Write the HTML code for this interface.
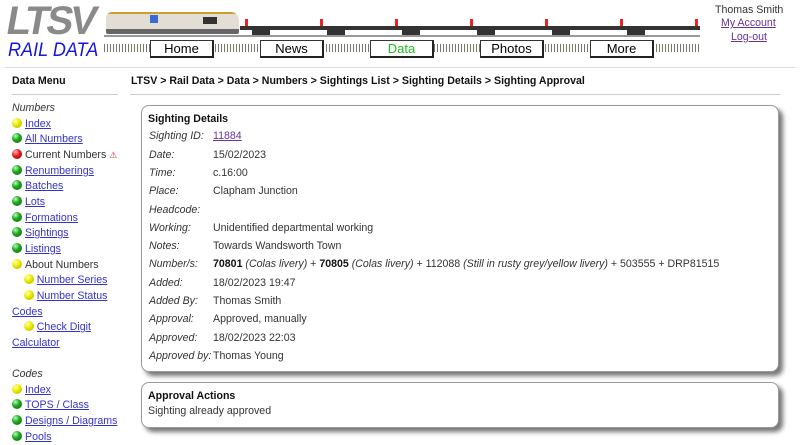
<!DOCTYPE html>
<html><head><style>
body{margin:0;width:800px;height:440px;overflow:hidden;background:#fff;font-family:"Liberation Sans",Arial,sans-serif;font-size:10.6px;color:#333;position:relative}
.a{position:absolute;white-space:nowrap}
a{color:#33c;text-decoration:underline}
.ball{display:inline-block;width:10px;height:10px;border-radius:50%;vertical-align:-1px;margin-right:3px}
.y{background:radial-gradient(circle at 35% 30%,#ffffc0,#ee0 40%,#aa0 100%)}
.g{background:radial-gradient(circle at 35% 30%,#bfb,#2a2 40%,#060 100%)}
.r{background:radial-gradient(circle at 35% 30%,#fbb,#e22 40%,#700 100%)}
.btn{position:absolute;top:40px;width:61px;height:15px;border:1px solid #333;border-right:2px solid #222;border-bottom:2px solid #222;background:#fff;font-size:13px;text-align:center;line-height:15px;color:#000}
.card{position:absolute;left:141px;width:636px;border:1px solid #999;border-radius:8px;background:#fff;box-shadow:4px 4px 5px #777}
.lb{position:absolute;left:149px;font-style:italic}
.vl{position:absolute;left:213px}
</style></head><body>
<div class="a" style="left:7px;top:1px;font-size:40px;line-height:40px;font-weight:bold;color:#8a8a8a;letter-spacing:-3px;transform:skewX(-10deg)">LTSV</div>
<div class="a" style="left:8px;top:40px;font-size:19px;line-height:22px;font-style:italic;color:#1515e0;transform:scaleX(0.95);transform-origin:left">RAIL DATA</div>
<!-- train -->
<div class="a" style="left:106px;top:12px;width:133px;height:22px;background:linear-gradient(#c9a030 0 2px,#e2ded6 2px 17px,#666 17px);border-radius:6px 8px 2px 2px"></div>
<div class="a" style="left:150px;top:15px;width:8px;height:8px;background:#3a6ad0"></div>
<div class="a" style="left:203px;top:17px;width:14px;height:7px;background:#333"></div>
<div class="a" style="left:240px;top:26px;width:460px;height:4px;background:#333"></div>
<div class="a" style="left:240px;top:30px;width:460px;height:5px;background:repeating-linear-gradient(90deg,transparent 0 12px,#333 12px 30px,transparent 30px 75px)"></div>
<div class="a" style="left:240px;top:19px;width:460px;height:7px;background:repeating-linear-gradient(90deg,transparent 0 5px,#e22 5px 8px,transparent 8px 75px)"></div>
<div class="a" style="left:104px;top:35px;width:596px;height:2px;background:#999"></div>
<div class="a" style="left:104px;top:44px;width:596px;height:8px;background:repeating-linear-gradient(90deg,#776 0 1px,#fff 1px 3px)"></div>
<div class="btn" style="left:150px">Home</div>
<div class="btn" style="left:260px">News</div>
<div class="btn" style="left:370px;color:#2b2">Data</div>
<div class="btn" style="left:480px">Photos</div>
<div class="btn" style="left:590px">More</div>
<div class="a" style="left:715px;top:4px">Thomas Smith</div>
<div class="a" style="left:721px;top:17px"><a style="color:#639">My Account</a></div>
<div class="a" style="left:731px;top:31px"><a style="color:#639">Log-out</a></div>
<div class="a" style="left:5px;top:67px;width:790px;height:1px;background:#ddd"></div>
<div class="a" style="left:12px;top:75px;font-weight:bold;color:#111">Data Menu</div>
<div class="a" style="left:131px;top:75px;font-weight:bold;color:#111">LTSV &gt; Rail Data &gt; Data &gt; Numbers &gt; Sightings List &gt; Sighting Details &gt; Sighting Approval</div>
<div class="a" style="left:12px;top:94px;width:106px;height:1px;background:#ccc"></div>
<div class="a" style="left:130px;top:94px;width:650px;height:1px;background:#ccc"></div>
<div class="a" style="left:12px;top:101px;line-height:15.65px">
<i>Numbers</i><br>
<span class="ball y"></span><a>Index</a><br>
<span class="ball g"></span><a>All Numbers</a><br>
<span class="ball r"></span>Current Numbers <span style="color:#d22;font-size:9px">⚠</span><br>
<span class="ball g"></span><a>Renumberings</a><br>
<span class="ball g"></span><a>Batches</a><br>
<span class="ball g"></span><a>Lots</a><br>
<span class="ball g"></span><a>Formations</a><br>
<span class="ball g"></span><a>Sightings</a><br>
<span class="ball g"></span><a>Listings</a><br>
<span class="ball y"></span>About Numbers<br>
&nbsp;&nbsp;&nbsp;&nbsp;<span class="ball y"></span><a>Number Series</a><br>
&nbsp;&nbsp;&nbsp;&nbsp;<span class="ball y"></span><a>Number Status</a><br>
<a>Codes</a><br>
&nbsp;&nbsp;&nbsp;&nbsp;<span class="ball y"></span><a>Check Digit</a><br>
<a>Calculator</a><br><br>
<i>Codes</i><br>
<span class="ball y"></span><a>Index</a><br>
<span class="ball g"></span><a>TOPS / Class</a><br>
<span class="ball g"></span><a>Designs / Diagrams</a><br>
<span class="ball g"></span><a>Pools</a>
</div>
<div class="card" style="top:105px;height:265px"></div>
<div class="card" style="top:382px;height:44px"></div>
<div class="a" style="left:148px;top:113px;font-weight:bold;color:#111">Sighting Details</div>
<div class="lb" style="top:130px">Sighting ID:</div><div class="vl" style="top:130px"><a style="color:#639">11884</a></div>
<div class="lb" style="top:149px">Date:</div><div class="vl" style="top:149px">15/02/2023</div>
<div class="lb" style="top:167px">Time:</div><div class="vl" style="top:167px">c.16:00</div>
<div class="lb" style="top:185px">Place:</div><div class="vl" style="top:185px">Clapham Junction</div>
<div class="lb" style="top:204px">Headcode:</div>
<div class="lb" style="top:222px">Working:</div><div class="vl" style="top:222px">Unidentified departmental working</div>
<div class="lb" style="top:240px">Notes:</div><div class="vl" style="top:240px">Towards Wandsworth Town</div>
<div class="lb" style="top:258px">Number/s:</div><div class="vl" style="top:258px"><b style="color:#111">70801</b> <i>(Colas livery)</i> + <b style="color:#111">70805</b> <i>(Colas livery)</i> + 112088 <i>(Still in rusty grey/yellow livery)</i> + 503555 + DRP81515</div>
<div class="lb" style="top:277px">Added:</div><div class="vl" style="top:277px">18/02/2023 19:47</div>
<div class="lb" style="top:295px">Added By:</div><div class="vl" style="top:295px">Thomas Smith</div>
<div class="lb" style="top:313px">Approval:</div><div class="vl" style="top:313px">Approved, manually</div>
<div class="lb" style="top:332px">Approved:</div><div class="vl" style="top:332px">18/02/2023 22:03</div>
<div class="lb" style="top:350px">Approved by:</div><div class="vl" style="top:350px">Thomas Young</div>
<div class="a" style="left:148px;top:390px;font-weight:bold;color:#111">Approval Actions</div>
<div class="a" style="left:148px;top:405px">Sighting already approved</div>
</body></html>
